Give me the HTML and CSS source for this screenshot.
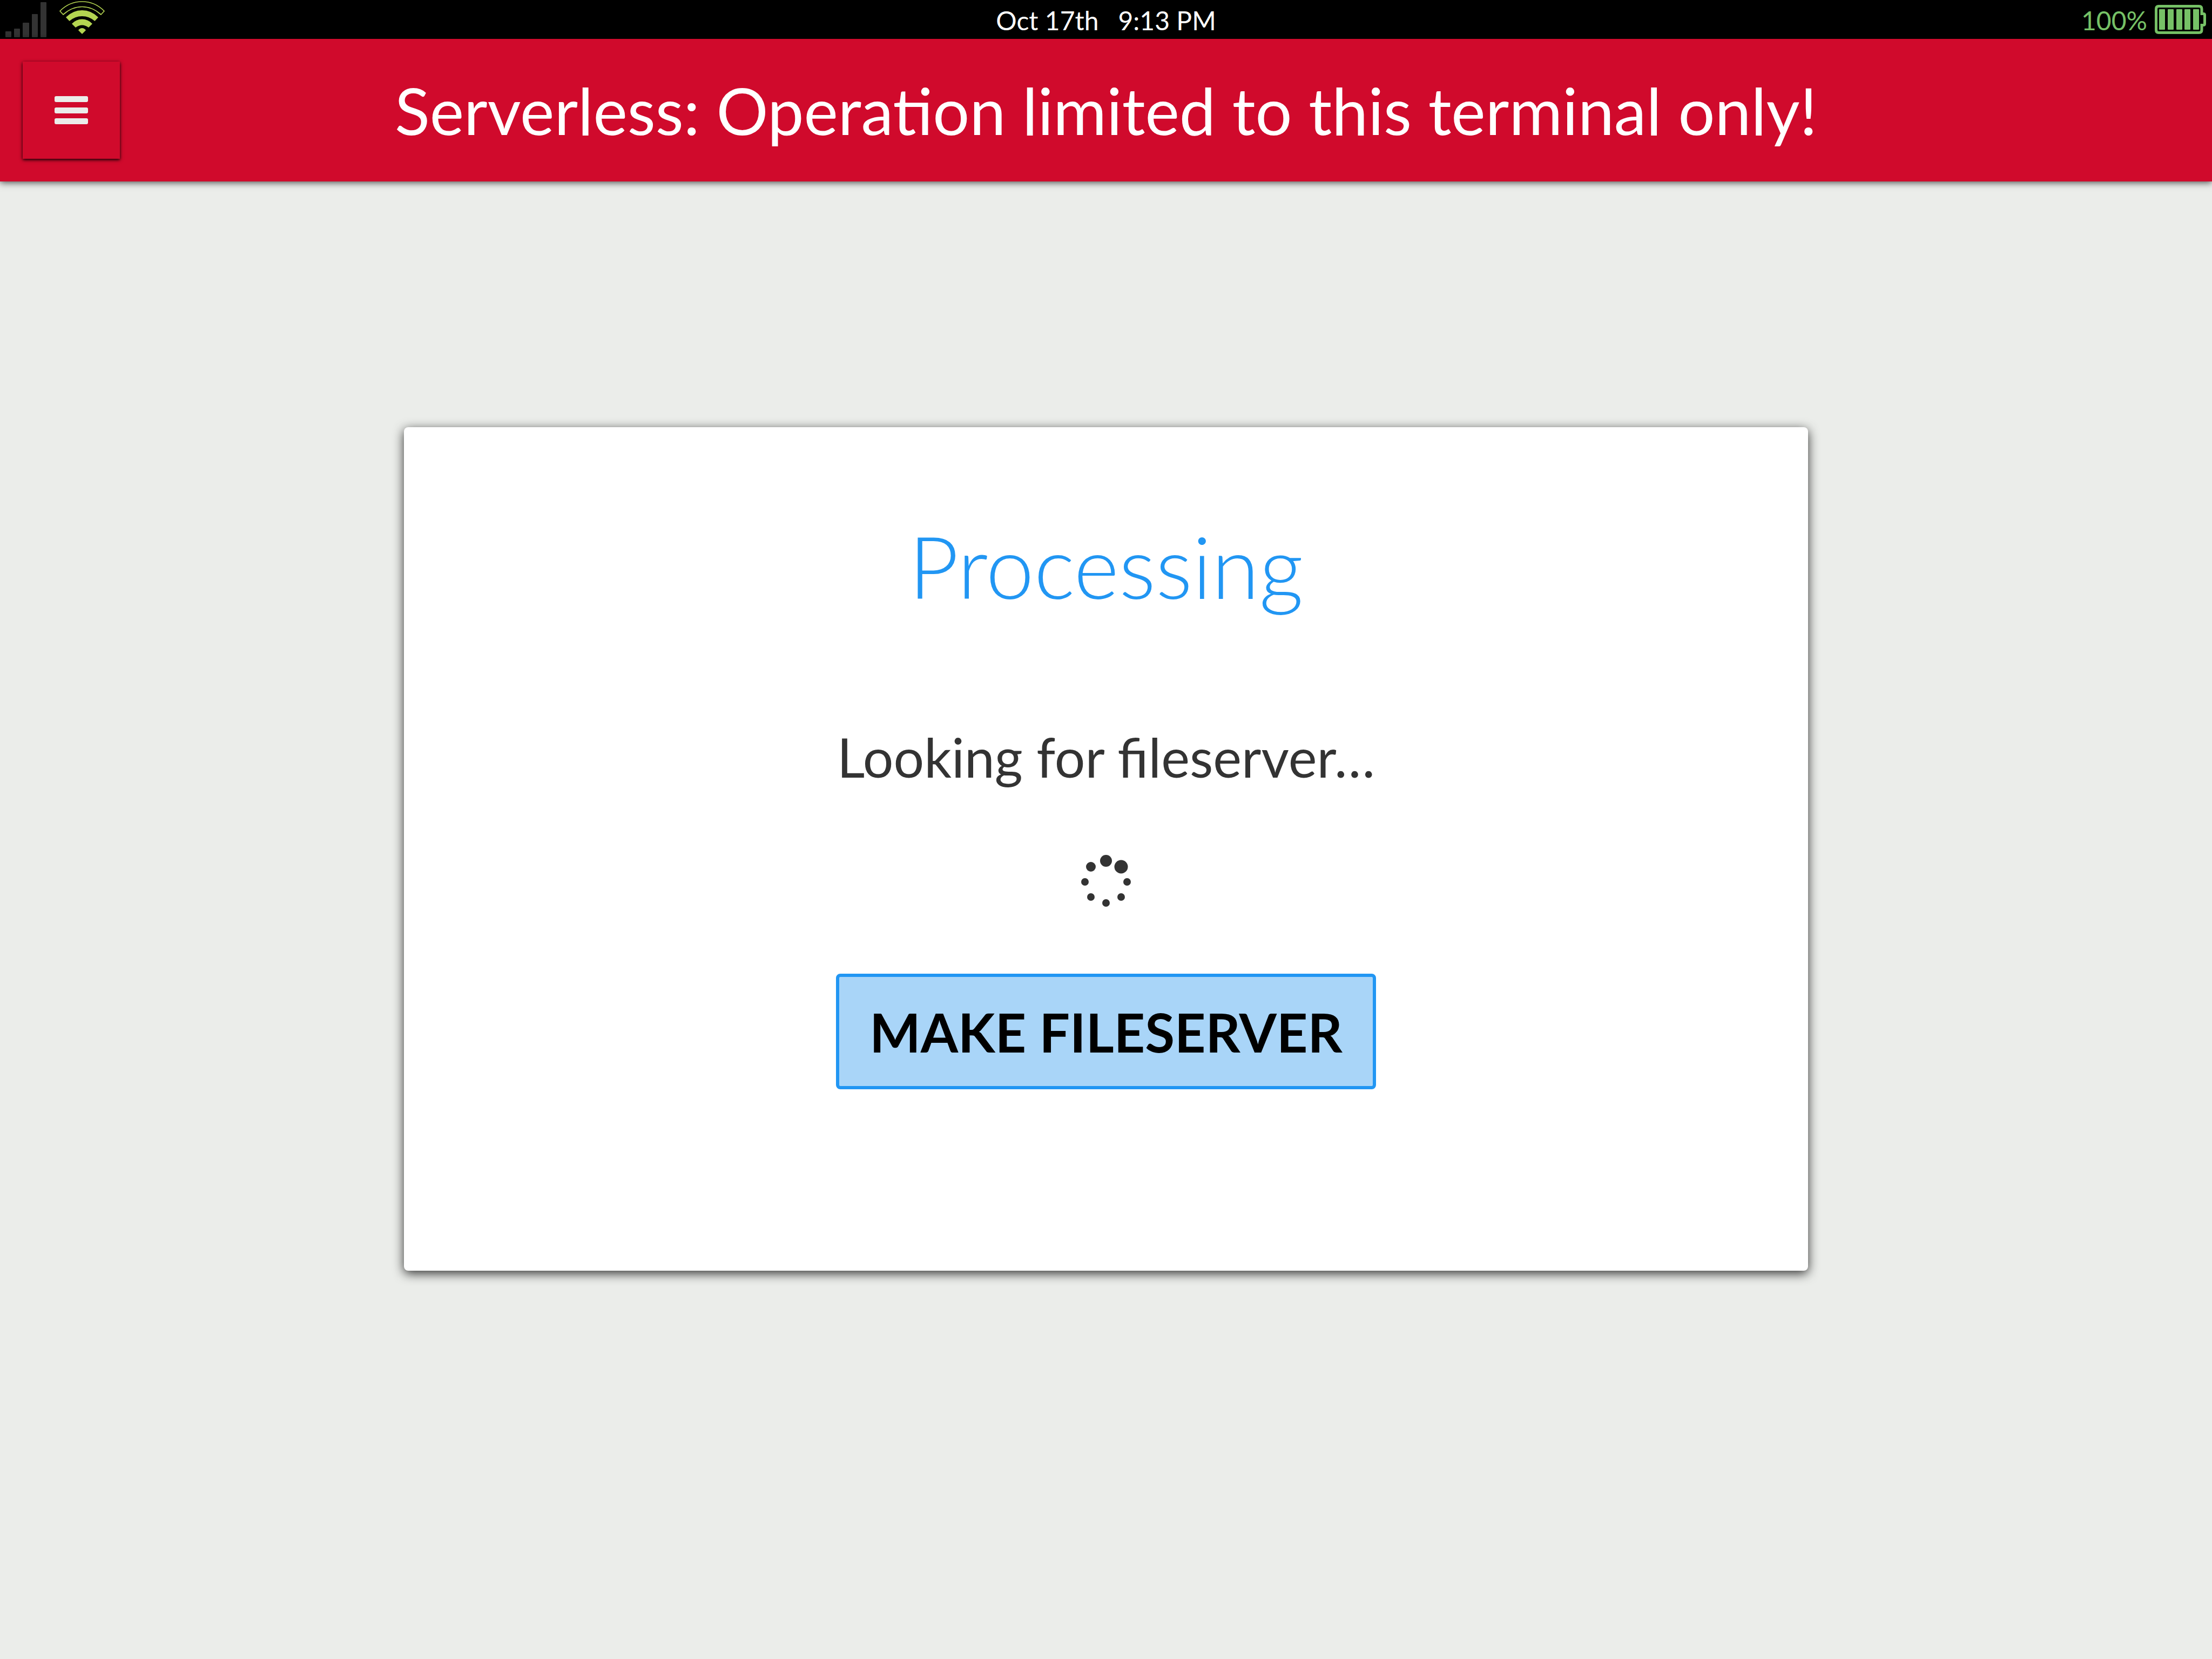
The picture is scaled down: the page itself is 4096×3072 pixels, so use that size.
FILE: index.html
```html
<!DOCTYPE html>
<html lang="en">
<head>
<meta charset="utf-8">
<title>Terminal</title>
<link rel="stylesheet" href="styles.css">
</head>
<body>
<div class="status">
  <div class="status-left">
    <svg class="signal" viewBox="0 0 76 65" width="76" height="65" fill="#333" role="img" aria-label="No signal">
      <rect x="0" y="54" width="11" height="11" rx="1"/>
      <rect x="16" y="49" width="11" height="16" rx="1"/>
      <rect x="32" y="38" width="12" height="27" rx="1"/>
      <rect x="49" y="22" width="11" height="43" rx="1"/>
      <rect x="65" y="0" width="11" height="65" rx="1"/>
    </svg>
    <svg class="wifi" viewBox="0 0 84 62" width="84" height="62" fill="#b4d551" role="img" aria-label="Wi-Fi">
      <path d="M1 18.500Q18 1 42 1T83 18.500L77 25Q61 10.500 42 10.500T7 25Z" fill="none" stroke="#b4d551" stroke-width="1.700" stroke-linejoin="round"/>
      <path d="M12 30Q25 17 42 17T72 30L65.500 37Q55 28 42 28T18.500 37Z"/>
      <path d="M23 42Q31 33.500 42 33.500T61 42L54 49Q48 44.500 42 44.500T30 49Z"/>
      <path d="M35 54Q38 50 42 50T49 54L42 61Z"/>
    </svg>
  </div>
  <div class="status-time"><span>Oct 17th</span><span>9:13 PM</span></div>
  <div class="status-battery">
    <span>100%</span>
    <svg viewBox="0 0 96 54" width="96" height="54" fill="#76c166" role="img" aria-label="Battery full">
      <path d="M7 2.500H82Q87 2.500 87 7.500V16.500H90Q92.500 16.500 92.500 19V35Q92.500 37.500 90 37.500H87V46.500Q87 51.500 82 51.500H7Q2.500 51.500 2.500 46.500V7.500Q2.500 2.500 7 2.500Z" fill="none" stroke="#76c166" stroke-width="5"/>
      <rect x="8" y="8" width="11" height="38" rx="1"/>
      <rect x="24" y="8" width="11" height="38" rx="1"/>
      <rect x="40" y="8" width="11" height="38" rx="1"/>
      <rect x="55" y="8" width="11" height="38" rx="1"/>
      <rect x="71" y="8" width="11" height="38" rx="1"/>
    </svg>
  </div>
</div>
<header class="bar">
  <button class="menu" type="button" aria-label="Menu">
    <svg viewBox="0 0 62 52" width="62" height="52" fill="#ebedea">
      <rect x="0" y="0" width="62" height="11" rx="3"/>
      <rect x="0" y="21" width="62" height="11" rx="3"/>
      <rect x="0" y="41" width="62" height="11" rx="3"/>
    </svg>
  </button>
  <h1 class="bar-title">Serverless: Operation limited to this terminal only!</h1>
</header>
<main class="content">
  <section class="card">
    <h2 class="card-title">Processing</h2>
    <p class="card-text">Looking for fileserver…</p>
    <svg class="spinner" viewBox="0 0 96 98" width="96" height="98" fill="#333" role="img" aria-label="Loading">
      <circle cx="48" cy="11" r="11"/>
      <circle cx="76" cy="22" r="12.500"/>
      <circle cx="87" cy="50" r="7"/>
      <circle cx="76" cy="78" r="7"/>
      <circle cx="48" cy="89" r="7"/>
      <circle cx="20" cy="78" r="7"/>
      <circle cx="9" cy="50" r="7"/>
      <circle cx="20" cy="22" r="9"/>
    </svg>
    <button class="action" type="button">MAKE FILESERVER</button>
  </section>
</main>
</body>
</html>
```
FILE: styles.css
```css
* {
  box-sizing: border-box;
}

body {
  margin: 0;
  min-height: 100vh;
  display: flex;
  flex-direction: column;
  background: #ebedea;
  color: #333;
  font-family: Lato, "Liberation Sans", sans-serif;
}

.status {
  height: 72px;
  padding: 0 10px;
  display: grid;
  grid-template-columns: 1fr auto 1fr;
  align-items: center;
  background: #000;
  color: #fff;
  font-size: 48px;
  line-height: 60px;
}

.status-left {
  display: flex;
  align-items: center;
  gap: 24px;
}

.status-left svg,
.status-battery svg {
  display: block;
}

.wifi {
  margin-bottom: 6px;
}

.status-time {
  display: flex;
  gap: 36px;
  padding-top: 4px;
}

.status-battery {
  display: flex;
  justify-content: flex-end;
  align-items: center;
  gap: 14px;
  color: #76c166;
}

.status-battery span {
  padding-top: 4px;
}

.bar {
  min-height: 264px;
  padding: 0 42px;
  display: grid;
  grid-template-columns: 180px 1fr 180px;
  align-items: center;
  background: #d00a2c;
  color: #fff;
  box-shadow: 0 2px 12px rgba(0, 0, 0, 0.7);
}

.menu {
  width: 180px;
  height: 180px;
  padding: 0;
  display: flex;
  align-items: center;
  justify-content: center;
  border: 0;
  background: #d00a2c;
  box-shadow: 0 2px 6px #000;
}

.bar-title {
  margin: 0;
  text-align: center;
  font-size: 120px;
  font-weight: 400;
  line-height: 144px;
}

.content {
  flex: 1;
  padding-bottom: 264px;
  display: flex;
  align-items: center;
  justify-content: center;
}

.card {
  width: 100%;
  max-width: 2600px;
  padding: 160px 48px 336px;
  display: flex;
  flex-direction: column;
  align-items: center;
  border-radius: 8px;
  background: #fff;
  box-shadow: 0 5px 20px rgba(0, 0, 0, 0.8);
}

.card-title {
  margin: 0;
  color: #2196f3;
  font-size: 160px;
  font-weight: 300;
  line-height: 192px;
}

.card-text {
  margin: 198px 0 122px;
  font-size: 100px;
  line-height: 120px;
}

.action {
  margin-top: 122px;
  padding: 41px 56px;
  border: 6px solid #2196f3;
  border-radius: 8px;
  background: #a9d5f8;
  color: #000;
  font-family: inherit;
  font-size: 100px;
  font-weight: 700;
  line-height: 120px;
}
```
